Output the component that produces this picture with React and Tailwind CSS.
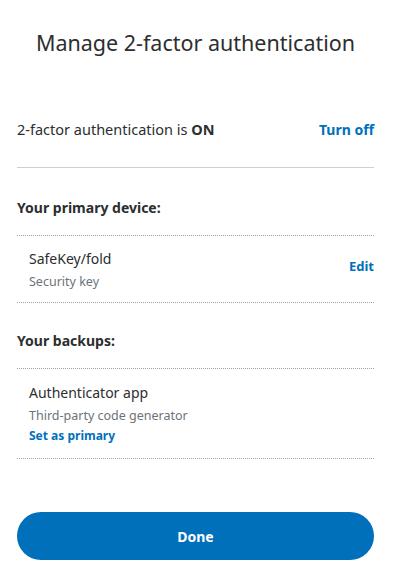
import React from 'react';

const App = () => {
  return (
    <div className="w-[415px] h-[588px] bg-white pt-[27px] text-[#2c2e2f]" style={{ fontFamily: '"Noto Sans", sans-serif' }}>
      <div className="ml-[17px] w-[357px]">
        <h1 className="text-center text-[21.5px] leading-[32px] text-[#2c2e2f]">Manage 2-factor authentication</h1>

        {/* Status */}
        <div className="mt-[58px] flex items-center justify-between pb-[26px] border-b border-[#cbd2d6]">
          <p className="text-[14.5px] leading-[24px]">2-factor authentication is <span className="font-bold">ON</span></p>
          <button className="text-[14px] font-bold text-[#0070ba]">Turn off</button>
        </div>

        {/* Primary device */}
        <h2 className="mt-[28px] text-[14px] leading-[24px] font-bold">Your primary device:</h2>
        <div className="mt-[15px] border-t border-b border-dotted border-[#9ea3a6] flex items-center justify-between pl-[12px] pt-[12px] pb-[9px]">
          <div>
            <p className="text-[14px] leading-[22px]">SafeKey/fold</p>
            <p className="text-[12.5px] leading-[23px] text-[#6c7378]">Security key</p>
          </div>
          <button className="mb-[7px] text-[13px] font-bold text-[#0070ba]">Edit</button>
        </div>

        {/* Backups */}
        <h2 className="mt-[26px] text-[14px] leading-[24px] font-bold">Your backups:</h2>
        <div className="mt-[15px] border-t border-b border-dotted border-[#9ea3a6] pl-[12px] pt-[13px] pb-[13px]">
          <p className="text-[14px] leading-[22px]">Authenticator app</p>
          <p className="text-[12.5px] leading-[23px] text-[#6c7378]">Third-party code generator</p>
          <button className="block text-[12px] leading-[18px] font-bold text-[#0070ba]">Set as primary</button>
        </div>

        <button className="mt-[53px] w-full h-[48px] rounded-full bg-[#0070ba] text-white text-[14px] font-bold">Done</button>
      </div>
    </div>
  );
};

export default App;
